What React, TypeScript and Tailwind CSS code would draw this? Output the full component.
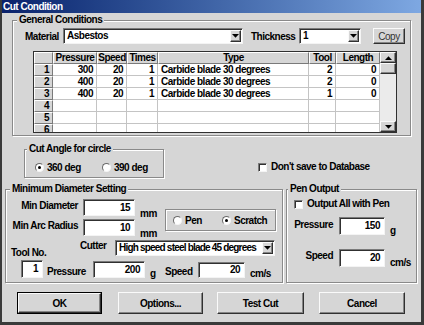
import React from "react";

const sunk =
  "bg-white border border-t-[#7a7a7a] border-l-[#7a7a7a] border-b-[#f4f4f4] border-r-[#f4f4f4] shadow-[inset_1px_1px_0_#303030]";
const raised =
  "bg-[#d6d6d6] border border-t-[#fafafa] border-l-[#fafafa] border-b-[#303030] border-r-[#303030] shadow-[inset_-1px_-1px_0_#858585]";
const etched =
  "border border-[#8a8a8a] shadow-[inset_1px_1px_0_#ffffff,1px_1px_0_#ffffff]";

function Arrow({ up }: { up?: boolean }) {
  return (
    <svg width="7" height="4" viewBox="0 0 7 4">
      {up ? (
        <polygon points="0,4 7,4 3.5,0.2" fill="#000" />
      ) : (
        <polygon points="0,0 7,0 3.5,3.8" fill="#000" />
      )}
    </svg>
  );
}

function Combo({ className, text, textClass = "" }: { className: string; text: string; textClass?: string }) {
  return (
    <div className={`${sunk} ${className} flex items-center h-[16px]`}>
      <span className={`flex-1 pl-[3px] leading-[12px] whitespace-nowrap overflow-hidden ${textClass}`}>{text}</span>
      <span className={`${raised} w-[11px] h-[12px] mr-[1px] flex items-center justify-center shrink-0`}>
        <Arrow />
      </span>
    </div>
  );
}

function Radio({ on }: { on?: boolean }) {
  return (
    <span className="w-[9px] h-[9px] rounded-full bg-white border border-t-[#6a6a6a] border-l-[#6a6a6a] border-b-[#f4f4f4] border-r-[#f4f4f4] flex items-center justify-center shrink-0">
      {on && <span className="w-[3px] h-[3px] rounded-full bg-black" />}
    </span>
  );
}

function Check() {
  return <span className={`${sunk} w-[9px] h-[9px] shrink-0`} />;
}

const headers = ["", "Pressure", "Speed", "Times", "Type", "Tool", "Length"];
const rows = [
  ["1", "300", "20", "1", "Carbide blade 30 degrees", "2", "0"],
  ["2", "400", "20", "1", "Carbide blade 30 degrees", "2", "0"],
  ["3", "400", "20", "1", "Carbide blade 30 degrees", "1", "0"],
  ["4", "", "", "", "", "", ""],
  ["5", "", "", "", "", "", ""],
  ["6", "", "", "", "", "", ""],
];

const hcell =
  "h-[12px] bg-[#d6d6d6] border border-t-white border-l-white border-b-[#7a7a7a] border-r-[#7a7a7a] leading-[10px] whitespace-nowrap overflow-hidden";

function Table() {
  return (
    <div className="mt-[7px] ml-[20px] w-[364px] h-[82px] border border-[#303030] flex bg-white">
      <div className="w-[346px] h-[80px] overflow-hidden">
        <div className="grid grid-cols-[19px_44px_30px_31px_151px_27px_44px]">
          {headers.map((h, i) => (
            <div key={i} className={`${hcell} text-center`}>
              {h}
            </div>
          ))}
          {rows.map((r, ri) =>
            r.map((c, ci) =>
              ci === 0 ? (
                <div key={`${ri}-${ci}`} className={`${hcell} text-right pr-[3px]`}>
                  {c}
                </div>
              ) : (
                <div
                  key={`${ri}-${ci}`}
                  className={`h-[12px] bg-white border-r border-b border-[#c4c4c4] leading-[11px] whitespace-nowrap overflow-hidden ${
                    ci === 4 ? "text-left pl-[3px]" : "text-right pr-[3px]"
                  }`}
                >
                  {c}
                </div>
              )
            )
          )}
        </div>
      </div>
      <div className="w-[16px] h-[80px] flex flex-col">
        <div className={`${raised} h-[11px] flex items-center justify-center`}>
          <Arrow up />
        </div>
        <div className={`${raised} h-[11px]`} />
        <div className="flex-1 bg-[#ebebeb]" />
        <div className={`${raised} h-[11px] flex items-center justify-center`}>
          <Arrow />
        </div>
      </div>
    </div>
  );
}

function Btn({ className, label, def }: { className: string; label: string; def?: boolean }) {
  if (def) {
    return (
      <div className={`${className} h-[22px] border border-black flex`}>
        <div className={`${raised} flex-1 flex items-center justify-center`}>{label}</div>
      </div>
    );
  }
  return (
    <div className={`${raised} ${className} h-[22px] flex items-center justify-center`}>{label}</div>
  );
}

export default function App() {
  return (
    <div className="w-[424px] h-[325px] bg-[#d6d6d6] font-['Liberation_Sans',Arial,sans-serif] font-bold text-[10px] tracking-[-0.5px] text-black overflow-hidden flex flex-col border-l-2 border-r-[3px] border-b-[3px] border-[#3a3a3a]">
      <div className="h-[13px] shrink-0 bg-linear-to-r from-[#0a226c] to-[#7ea8e2] text-white leading-[13px] pl-[1px]">
        Cut Condition
      </div>

      <fieldset className={`${etched} ml-[10px] mt-[1px] w-[399px] pb-[2px]`}>
        <legend className="ml-[4px] px-[2px] leading-[12px] bg-[#d6d6d6]">General Conditions</legend>
        <div className="flex items-center h-[16px] mt-[2px] pl-[12px]">
          <span className="w-[38px]">Material</span>
          <Combo className="w-[180px]" text="Asbestos" />
          <span className="ml-[8px] w-[48px]">Thickness</span>
          <Combo className="w-[62px]" text="1" />
          <div className={`${raised} ml-[12px] w-[32px] h-[16px] flex items-center justify-center font-normal text-[#333]`}>
            Copy
          </div>
        </div>
        <Table />
      </fieldset>

      <div className="flex items-start ml-[22px] mt-[7px]">
        <fieldset className={`${etched} w-[140px] pb-[4px]`}>
          <legend className="ml-[2px] px-[2px] leading-[12px] bg-[#d6d6d6]">Cut Angle for circle</legend>
          <div className="mt-[6px] h-[12px] flex items-center pl-[10px]">
            <div className="w-[67px] flex items-center">
              <Radio on />
              <span className="ml-[3px]">360 deg</span>
            </div>
            <div className="flex items-center">
              <Radio />
              <span className="ml-[3px]">390 deg</span>
            </div>
          </div>
        </fieldset>
        <div className="ml-[94px] mt-[19px] flex items-center">
          <Check />
          <span className="ml-[4px] leading-[10px]">Don't save to Database</span>
        </div>
      </div>

      <div className="flex ml-[3px] mt-[5px]">
        <fieldset className={`${etched} w-[278px] pb-[4px]`}>
          <legend className="ml-[4px] px-[2px] leading-[12px] bg-[#d6d6d6]">Minimum Diameter Setting</legend>
          <div className="flex mt-[4px]">
            <div className="w-[157px]">
              <div className="flex h-[17px]">
                <span className="w-[72px] text-right leading-[14px]">Min Diameter</span>
                <div className={`${sunk} ml-[5px] w-[52px] h-[17px] text-right pr-[4px] leading-[15px]`}>15</div>
                <span className="ml-[5px] self-end leading-[10px] mb-[-3px]">mm</span>
              </div>
              <div className="flex h-[17px] mt-[3px]">
                <span className="w-[72px] text-right leading-[14px]">Min Arc Radius</span>
                <div className={`${sunk} ml-[5px] w-[52px] h-[17px] text-right pr-[4px] leading-[15px]`}>10</div>
                <span className="ml-[5px] self-end leading-[10px] mb-[-3px]">mm</span>
              </div>
            </div>
            <div className={`${etched} ml-[2px] mt-[10px] w-[111px] h-[22px] flex items-center pl-[7px]`}>
              <div className="w-[49px] flex items-center">
                <Radio />
                <span className="ml-[3px]">Pen</span>
              </div>
              <div className="flex items-center">
                <Radio on />
                <span className="ml-[3px]">Scratch</span>
              </div>
            </div>
          </div>
          <div className="flex h-[16px] mt-[4px]">
            <div className="w-[74px] pl-[5px]">
              <span className="block mt-[7px] leading-[11px]">Tool No.</span>
            </div>
            <span className="w-[35px] leading-[11px]">Cutter</span>
            <Combo
              className="w-[160px]"
              text="High speed steel blade 45 degrees"
              textClass="tracking-[-0.8px] pl-[2px]"
            />
          </div>
          <div className="flex h-[18px] mt-[4px]">
            <div className={`${sunk} ml-[15px] w-[22px] h-[18px] text-right pr-[4px] leading-[15px]`}>1</div>
            <span className="ml-[4px] w-[46px] self-end leading-[12px]">Pressure</span>
            <div className={`${sunk} w-[52px] h-[17px] mt-[1px] text-right pr-[4px] leading-[15px]`}>200</div>
            <span className="ml-[5px] w-[15px] self-end leading-[10px] mb-[-1px]">g</span>
            <span className="w-[33px] self-end leading-[12px]">Speed</span>
            <div className={`${sunk} w-[47px] h-[16px] mt-[2px] text-right pr-[4px] leading-[14px]`}>20</div>
            <span className="ml-[5px] self-end leading-[10px] mb-[-1px]">cm/s</span>
          </div>
        </fieldset>

        <fieldset className={`${etched} ml-[3px] w-[131px]`}>
          <legend className="ml-[1px] px-[2px] leading-[12px] bg-[#d6d6d6]">Pen Output</legend>
          <div className="mt-[4px] h-[10px] flex items-center pl-[7px]">
            <Check />
            <span className="ml-[4px] leading-[10px]">Output All with Pen</span>
          </div>
          <div className="flex h-[18px] mt-[8px]">
            <span className="w-[46px] text-right mt-[2px] leading-[11px]">Pressure</span>
            <div className={`${sunk} ml-[6px] w-[46px] h-[18px] text-right pr-[4px] leading-[16px]`}>150</div>
            <span className="ml-[5px] self-end leading-[10px] mb-[-1px]">g</span>
          </div>
          <div className="flex h-[18px] mt-[14px]">
            <span className="w-[46px] text-right mt-[1px] leading-[11px]">Speed</span>
            <div className={`${sunk} ml-[6px] w-[46px] h-[18px] text-right pr-[4px] leading-[16px]`}>20</div>
            <span className="ml-[5px] self-end leading-[10px] mb-[-1px]">cm/s</span>
          </div>
        </fieldset>
      </div>

      <div className="flex mt-[9px] ml-[15px]">
        <Btn className="w-[85px]" label="OK" def />
        <Btn className="ml-[16px] w-[85px]" label="Options..." />
        <Btn className="ml-[14px] w-[87px]" label="Test Cut" />
        <Btn className="ml-[15px] w-[86px]" label="Cancel" />
      </div>
    </div>
  );
}
